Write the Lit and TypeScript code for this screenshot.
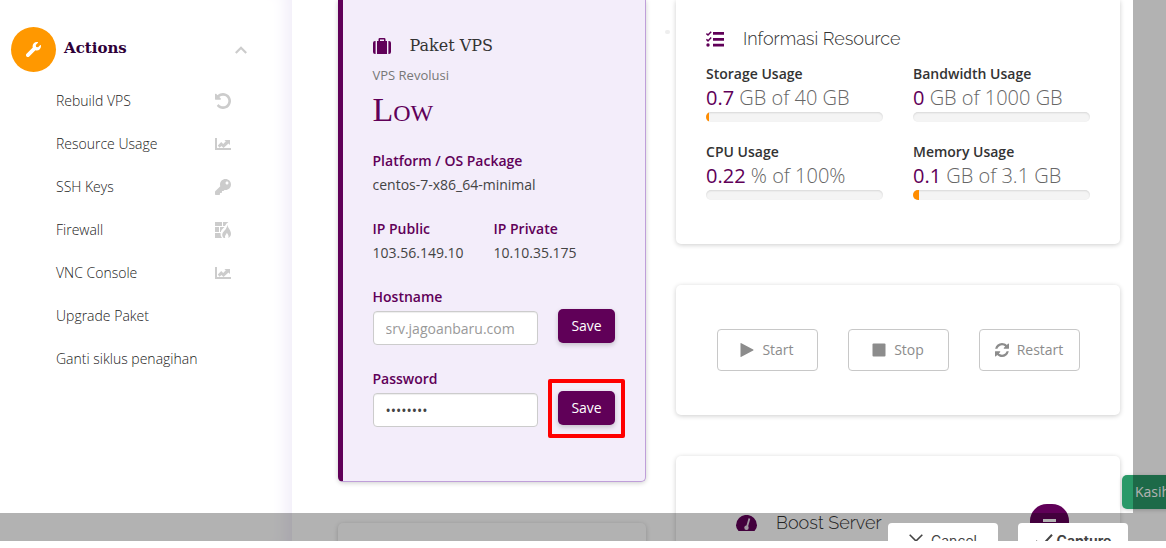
import { LitElement, html, svg, css, nothing } from "lit";
import { customElement, property } from "lit/decorators.js";

const undo = svg`<svg viewBox="128 128 1536 1536"><path d="M1664 896q0 156-61 298t-164 245-245 164-298 61q-172 0-327-72.5t-264-204.5q-7-10-6.5-22.5t8.5-20.5l137-138q10-9 25-9 16 2 23 12 73 95 179 147t225 52q104 0 198.5-40.5t163.5-109.5 109.5-163.5 40.5-198.5-40.5-198.5-109.5-163.5-163.5-109.5-198.5-40.5q-98 0-188 35.5t-160 101.5l137 138q31 30 14 69-17 40-59 40h-448q-26 0-45-19t-19-45v-448q0-42 40-59 39-17 69 14l130 129q107-101 244.5-156.5t284.5-55.5q156 0 298 61t245 164 164 245 61 298z"/></svg>`;
const chart = svg`<svg viewBox="0 0 16 16"><path d="M0 2h2v10h14v2H0zM2.8 9.600 6.200 6l2 2 2.600-2.700-1.400-1.400H15v5l-1.500-1.400-5 4.400-2-2-2 1.900z"/></svg>`;
const key = svg`<svg viewBox="0 0 512 512"><path d="M512 176.001C512 273.203 433.202 352 336 352c-11.22 0-22.19-1.062-32.827-3.069l-24.012 27.014A23.999 23.999 0 0 1 261.223 384H224v40c0 13.255-10.745 24-24 24h-40v40c0 13.255-10.745 24-24 24H24c-13.255 0-24-10.745-24-24v-78.059c0-6.365 2.529-12.47 7.029-16.971l161.802-161.802C163.108 213.814 160 195.271 160 176 160 78.798 238.797.001 335.999 0 433.488-.001 512 78.511 512 176.001zM336 128c0 26.51 21.49 48 48 48s48-21.49 48-48-21.49-48-48-48-48 21.49-48 48z"/></svg>`;
const wall = svg`<svg viewBox="0 0 16 16"><path d="M0 0h7v4H0zM8 0h5.400Q11 1.500 10 4H8zM0 5h4v5H0zM5 5h4.500q-3.500 3-3.700 5H5zM0 11h5.500q-.2 3 1.500 5H0z"/><path d="M12.400 2.600c.2 3.600 3.600 5.400 3.600 9.100 0 2-1 3.400-2.700 4.300.8-2.200-.3-3.800-1.500-5.300-.2 1.500-2.600 3-1.500 5.300h-1.600c-3.200-3.400-.4-6.300 1.600-8.300.9-1 1.900-2.600 2.100-5.100z"/></svg>`;
const wrench = svg`<svg viewBox="0 0 512 512"><path d="M507.730 109.100c-2.240-9.030-13.540-12.090-20.120-5.510l-74.360 74.360-67.880-11.310-11.310-67.880 74.360-74.360c6.620-6.620 3.430-17.900-5.660-20.160-47.380-11.740-99.550.91-136.580 37.930-39.640 39.640-50.550 97.100-34.050 147.200L18.740 402.760c-24.990 24.990-24.990 65.510 0 90.500 24.990 24.990 65.510 24.990 90.500 0l213.210-213.210c50.120 16.710 107.470 5.680 147.370-34.220 37.070-37.070 49.700-89.320 37.910-136.730z"/></svg>`;
const chevron = svg`<svg class="line" viewBox="0 0 12 8" stroke-width="2.200"><path d="M.8 7 6 1.800 11.200 7"/></svg>`;
const suitcase = svg`<svg viewBox="0 0 18 16"><path d="M0 5q0-2 2-2h.6v13H2q-2 0-2-2zM18 5q0-2-2-2h-.6v13h.6q2 0 2-2zM4 3h1.500V1.300Q5.500 0 6.800 0h4.400q1.300 0 1.300 1.300V3H14v13H4zM7 3h4V1.500H7z"/></svg>`;
const tasks = svg`<svg viewBox="0 0 18 16"><path d="M7 1h11v2.800H7zM7 6.900h11v2.800H7zM7 12.800h11v2.800H7z"/><circle cx="2" cy="14" r="1.700"/><path d="M.4 2.500 2 4 5.200.7M.4 8.400 2 9.900l3.200-3.300" fill="none" stroke="currentColor" stroke-width="1.500"/></svg>`;
const play = svg`<svg viewBox="0 0 14 14"><path d="M.5.600Q.5-.3 1.400.2L13.200 6.500q.7.500 0 1L1.400 13.800Q.5 14.300.5 13.400z"/></svg>`;
const stop = svg`<svg viewBox="0 0 14 14"><rect x=".5" y=".5" width="13" height="13" rx="1"/></svg>`;
const refresh = svg`<svg viewBox="128 128 1536 1536"><path d="M1639 1056q0 5-1 7-64 268-268 434.500t-478 166.500q-146 0-282.500-55t-243.500-157l-129 129q-19 19-45 19t-45-19-19-45v-448q0-26 19-45t45-19h448q26 0 45 19t19 45-19 45l-137 137q71 66 161 102t187 36q134 0 250-65t186-179q11-17 53-117 8-23 30-23h192q13 0 22.500 9.500t9.500 22.500zm25-800v448q0 26-19 45t-45 19h-448q-26 0-45-19t-19-45 19-45l138-138q-148-137-349-137-134 0-250 65t-186 179q-11 17-53 117-8 23-30 23h-199q-13 0-22.500-9.500t-9.500-22.500v-7q65-268 270-434.500t480-166.500q146 0 284 55.500t245 156.500l130-129q19-19 45-19t45 19 19 45z"/></svg>`;
const gauge = svg`<svg viewBox="0 0 21 16"><path d="M2.500 16Q0 13.500 0 10.300A10.400 10.300 0 0 1 21 10.300Q21 13.500 18.500 16z"/><path d="M13.400 3.500 11 12" stroke="#e8d8e8" stroke-width="1.800"/><circle cx="10.500" cy="12.800" r="2.200" fill="#e8d8e8"/></svg>`;
const cross = svg`<svg class="line" viewBox="0 0 14 14" stroke-width="1.600"><path d="M.7.700l12.600 12.600M13.300.700.700 13.300"/></svg>`;
const tick = svg`<svg class="line" viewBox="0 0 18 14" stroke-width="2"><path d="M1 7l5 5.500L17 .8"/></svg>`;

const actions = [
  { label: "Rebuild VPS", icon: undo },
  { label: "Resource Usage", icon: chart },
  { label: "SSH Keys", icon: key },
  { label: "Firewall", icon: wall },
  { label: "VNC Console", icon: chart },
  { label: "Upgrade Paket" },
  { label: "Ganti siklus penagihan" },
];

const usages = [
  { label: "Storage Usage", used: "0.7", rest: "GB of 40 GB", percent: 1.8 },
  { label: "Bandwidth Usage", used: "0", rest: "GB of 1000 GB", percent: 0 },
  { label: "CPU Usage", used: "0.22", rest: "% of 100%", percent: 0 },
  { label: "Memory Usage", used: "0.1", rest: "GB of 3.1 GB", percent: 3.2 },
];

@customElement("usage-meter")
export class UsageMeter extends LitElement {
  @property() label = "";
  @property() used = "";
  @property() rest = "";
  @property({ type: Number }) percent = 0;

  static styles = css`
    :host { display: block; }
    .label { font-weight: 600; font-size: 14px; line-height: 24px; color: #333; }
    .value { font-size: 20px; line-height: 24px; font-weight: 300; color: #666; white-space: nowrap; }
    .used { color: #600058; font-weight: 400; }
    .track { height: 10px; margin-top: 2px; border-radius: 5px; background: #f4f4f4; overflow: hidden; box-shadow: inset 0 1px 2px rgba(0, 0, 0, 0.12); }
    .fill { height: 100%; background: #ff8c00; }
  `;

  render() {
    return html`
      <div class="label">${this.label}</div>
      <div class="value"><span class="used">${this.used}</span> ${this.rest}</div>
      <div class="track" role="progressbar" aria-label=${this.label} aria-valuenow=${this.percent}>
        <div class="fill" style="width:${this.percent}%"></div>
      </div>
    `;
  }
}

@customElement("app-root")
export class AppRoot extends LitElement {
  static styles = css`
    :host { display: block; box-sizing: border-box; height: 100vh; padding-bottom: 7px; background: #fff; font-family: "Open Sans", sans-serif; font-size: 14px; line-height: 24px; color: #444; }
    * { box-sizing: border-box; }
    svg { display: block; width: 100%; height: 100%; fill: currentColor; }
    .line { fill: none; stroke: currentColor; }
    h2, h3, p { margin: 0; }
    button, input { font: inherit; }
    .screen { position: relative; height: 100%; overflow: hidden; display: flex; }
    .side { flex: 0 0 25%; padding: 27px 45px 0 11px; background: #fff; box-shadow: inset -18px 0 16px -12px #f1edf9; }
    .side-head { display: flex; align-items: center; width: 100%; padding: 0; border: 0; background: none; text-align: left; color: #2e0038; }
    .badge { width: 45px; height: 45px; padding: 15px; border-radius: 50%; background: #ff9800; color: #fff; }
    .side-title { flex: 1; padding: 0 0 4px 8px; font: 700 15px/24px "DejaVu Serif", serif; }
    .chev { width: 12px; height: 8px; color: #ccc; }
    .menu { list-style: none; margin: 7px 0 0; padding: 0 16px 0 45px; }
    .menu a { display: flex; align-items: center; justify-content: space-between; height: 43px; color: #222; font-weight: 300; text-decoration: none; }
    .menu-icon { width: 16px; height: 16px; color: #ccc; }
    .main { flex: 1; min-width: 0; padding: 0 46px; }
    .grid { display: grid; grid-template-columns: repeat(12, minmax(0, 1fr)); column-gap: 30px; align-items: start; }
    .col { display: grid; gap: 41px; }
    .narrow { grid-column: span 5; }
    .wide { grid-column: span 7; }
    .card { border-radius: 5px; background: #fff; box-shadow: 0 1px 5px rgba(0, 0, 0, 0.2); }
    .flush { border-top-left-radius: 0; border-top-right-radius: 0; }
    .plan { padding: 34px 30px 32px; background: #f3edfa; border: 1px solid #bf9fd9; border-top: 0; border-left: 5px solid #600058; }
    .head { display: flex; align-items: center; gap: 19px; color: #333; }
    .head-icon { flex: none; width: 18px; height: 16px; color: #600058; }
    .plan-title { font: 400 16px/24px "DejaVu Serif", serif; }
    .sub { margin-top: 5px; font-size: 13px; color: #777; }
    .tier { font: 400 34px/40px "Liberation Serif", serif; font-variant: small-caps; color: #600058; margin: 3px 0 19px; }
    .term { font-weight: 600; color: #600058; display: block; }
    .pair { display: grid; gap: 0 30px; margin: 20px 0; }
    .ips { grid-template-columns: 91px 1fr; }
    .field { display: flex; align-items: flex-start; gap: 20px; padding-bottom: 22px; }
    .entry { flex: 1; min-width: 0; }
    .box { display: block; width: 100%; height: 34px; margin-top: 2px; padding: 0 12px; border: 1px solid #ccc; border-radius: 4px; background: #fff; color: #444; box-shadow: inset 0 1px 1px rgba(0, 0, 0, 0.07); }
    .box::placeholder { color: #999; opacity: 1; }
    .save-wrap { position: relative; margin-top: 24px; }
    .save { display: block; height: 34px; padding: 0; width: 57px; border: 0; border-radius: 5px; background: #600058; color: #fff; font-weight: 500; box-shadow: 0 2px 5px rgba(0, 0, 0, 0.2); }
    .mark { position: absolute; inset: -12px -10px -13px; border: 4px solid #f00; border-radius: 2px; pointer-events: none; }
    .stub { height: 120px; }
    .info { padding: 27px 30px 44px; }
    .light-title { font: 300 18px/24px Raleway, Lato, sans-serif; color: #333; white-space: nowrap; }
    .meters { display: grid; grid-template-columns: 1fr 1fr; gap: 18px 30px; margin-top: 11px; }
    .power { display: flex; justify-content: center; gap: 30px; padding: 44px 30px; }
    .power-btn { display: flex; align-items: center; justify-content: center; gap: 8px; width: 101px; height: 42px; padding: 0; border: 1px solid #c8c8c8; border-radius: 4px; background: #fff; color: #8c8c8c; }
    .power-icon { width: 14px; height: 14px; }
    .boost { padding: 55px 60px 40px; }
    .boost .head-icon { width: 21px; }
    .dot { position: absolute; left: 57%; top: 30px; width: 5px; height: 4px; border-radius: 2px; background: #eee; }
    .chat { position: absolute; right: 97px; bottom: -3px; width: 39px; height: 40px; border: 0; border-radius: 17px; background: #600058; }
    .chat::after { content: ""; position: absolute; left: 13px; top: 15px; width: 13px; height: 3px; background: #fff; }
    .feedback { position: absolute; right: -40px; top: 475px; width: 84px; height: 34px; padding: 0 13px; border: 0; border-radius: 5px; background: #2a9968; color: #fff; text-align: left; box-shadow: 0 1px 4px rgba(0, 0, 0, 0.2); }
    .shade { position: absolute; inset: 0 33px 28px 0; box-shadow: 0 0 0 2000px rgba(0, 0, 0, 0.3); pointer-events: none; }
    .tools { position: absolute; right: 38px; bottom: -18px; display: flex; gap: 20px; }
    .tool { display: flex; align-items: center; justify-content: center; gap: 8px; width: 110px; height: 36px; padding: 0; border: 0; border-radius: 4px; background: #fff; color: #444; font: 400 14px/20px Inter, sans-serif; }
    .strong { font-weight: 700; gap: 4px; }
    .tool-icon { width: 14px; height: 14px; }
    .strong .tool-icon { width: 18px; }
  `;

  render() {
    return html`
      <div class="screen">
        <nav class="side">
          <button class="side-head" aria-expanded="true">
            <span class="badge">${wrench}</span>
            <span class="side-title">Actions</span>
            <span class="chev">${chevron}</span>
          </button>
          <ul class="menu">
            ${actions.map((a) => html`<li><a href="#">${a.label}${a.icon ? html`<span class="menu-icon">${a.icon}</span>` : nothing}</a></li>`)}
          </ul>
        </nav>
        <main class="main">
          <div class="grid">
            <div class="col narrow">
              <section class="card flush plan">
                <div class="head"><span class="head-icon">${suitcase}</span><h2 class="plan-title">Paket VPS</h2></div>
                <p class="sub">VPS Revolusi</p>
                <p class="tier">Low</p>
                <div><span class="term">Platform / OS Package</span>centos-7-x86_64-minimal</div>
                <div class="pair ips">
                  <div><span class="term">IP Public</span>103.56.149.10</div>
                  <div><span class="term">IP Private</span>10.10.35.175</div>
                </div>
                <div class="field">
                  <div class="entry">
                    <label class="term" for="host">Hostname</label>
                    <input class="box" id="host" type="text" placeholder="srv.jagoanbaru.com" />
                  </div>
                  <div class="save-wrap"><button class="save">Save</button></div>
                </div>
                <div class="field">
                  <div class="entry">
                    <label class="term" for="pass">Password</label>
                    <input class="box" id="pass" type="password" value="password" />
                  </div>
                  <div class="save-wrap"><button class="save">Save</button><span class="mark"></span></div>
                </div>
              </section>
              <section class="card stub"></section>
            </div>
            <div class="col wide">
              <section class="card flush info">
                <div class="head"><span class="head-icon">${tasks}</span><h2 class="light-title">Informasi Resource</h2></div>
                <div class="meters">
                  ${usages.map((u) => html`<usage-meter .label=${u.label} .used=${u.used} .rest=${u.rest} .percent=${u.percent}></usage-meter>`)}
                </div>
              </section>
              <section class="card power">
                <button class="power-btn"><span class="power-icon">${play}</span>Start</button>
                <button class="power-btn"><span class="power-icon">${stop}</span>Stop</button>
                <button class="power-btn"><span class="power-icon">${refresh}</span>Restart</button>
              </section>
              <section class="card boost">
                <div class="head"><span class="head-icon">${gauge}</span><h2 class="light-title">Boost Server</h2></div>
              </section>
            </div>
          </div>
        </main>
        <span class="dot"></span>
        <button class="chat" aria-label="Chat"></button>
        <button class="feedback">Kasih</button>
        <div class="shade"></div>
        <div class="tools">
          <button class="tool"><span class="tool-icon">${cross}</span>Cancel</button>
          <button class="tool strong"><span class="tool-icon">${tick}</span>Capture</button>
        </div>
      </div>
    `;
  }
}
